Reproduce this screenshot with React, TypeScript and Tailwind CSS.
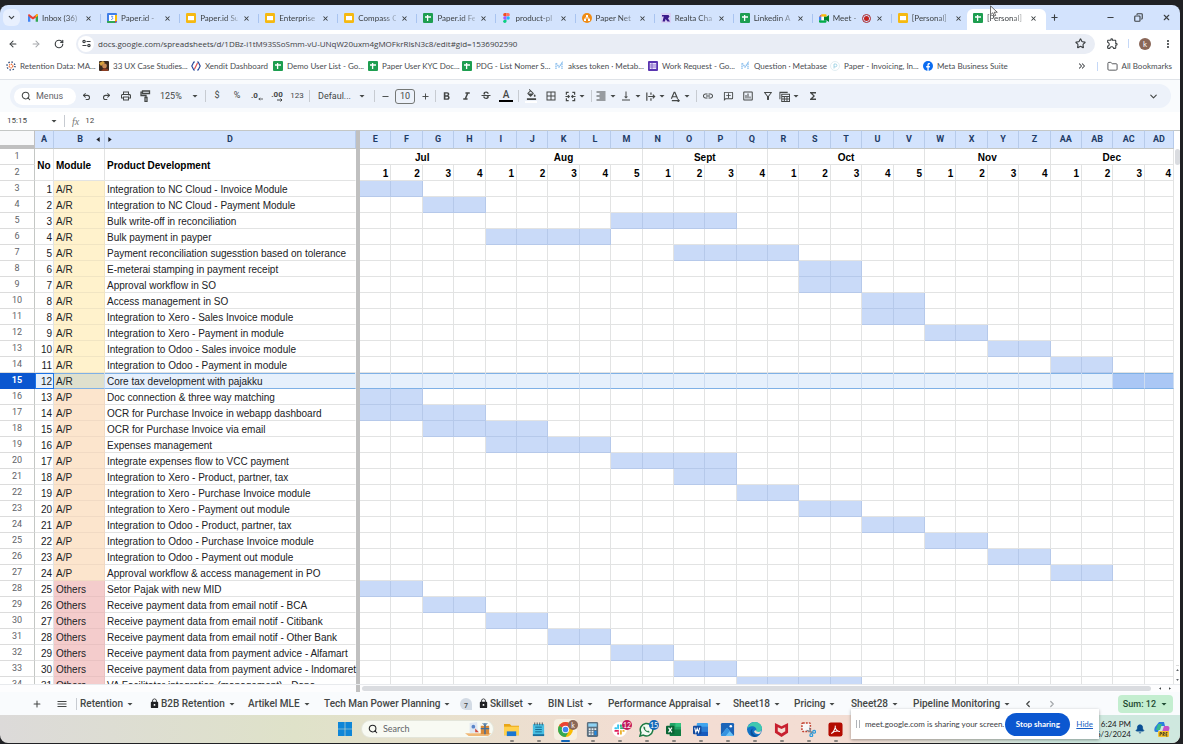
import type { ReactNode } from "react";
import {
  ArrowLeft, ArrowRight, Bell, ChevronDown, ChevronLeft, ChevronRight, ChevronsRight, Copy, Folder,
  Minus, Plus, Redo2, RotateCw, Search, Star, Undo2, X,
} from "lucide-react";
import {
  MdArrowDropDown, MdBorderAll, MdFormatAlignRight, MdFormatBold, MdFormatColorFill, MdFormatItalic,
  MdFunctions, MdInsertChartOutlined, MdLink, MdLock, MdMenu, MdMoreVert, MdOutlineAddComment,
  MdOutlineExtension, MdOutlineFilterAlt, MdOutlinePrint, MdStrikethroughS, MdVerticalAlignBottom,
} from "react-icons/md";

/* ---------- Small logos ---------- */

const SheetsLogo = () => (
  <svg viewBox="0 0 10 10" className="size-[10px] shrink-0">
    <rect width="10" height="10" rx="1" fill="#1e9e50" />
    <path d="M2 4h6M4.6 2v6" stroke="#fff" strokeWidth="1.3" />
  </svg>
);
const SlidesLogo = () => (
  <svg viewBox="0 0 10 10" className="size-[10px] shrink-0">
    <rect width="10" height="10" rx="1.2" fill="#f5b912" />
    <rect x="2" y="3" width="6" height="4.2" fill="#fff" />
  </svg>
);
const GmailLogo = () => (
  <svg viewBox="0 0 12 9" className="w-[10px] h-2 shrink-0">
    <path d="M0 9V1.5L2.8 3.6V9z" fill="#4285f4" />
    <path d="M12 9V1.5L9.2 3.6V9z" fill="#34a853" />
    <path d="M0 1.400C0 0 1.400-.3 2.400.5L6 3.200 9.600.5C10.600-.3 12 0 12 1.400L9.200 4.200 6 6.300 2.800 4.200z" fill="#ea4335" />
    <path d="M12 1.400C12 .2 10.600-.3 9.600.5l-.4.4v3.300z" fill="#fbbc04" />
  </svg>
);
const CalendarLogo = () => (
  <svg viewBox="0 0 10 10" className="size-[10px] shrink-0">
    <rect width="10" height="10" rx="1" fill="#3f7ee8" />
    <path d="M8 2h2v6H8z" fill="#fbbc04" />
    <path d="M0 8h8v2H1a1 1 0 0 1-1-1z" fill="#34a853" />
    <path d="M8 8h2l-2 2z" fill="#ea4335" />
    <rect x="2" y="2" width="6" height="6" fill="#fff" />
    <path d="M4 3.300h1.800L5 4.700c1 0 1.200 1.900-.9 1.900" fill="none" stroke="#3f7ee8" strokeWidth=".8" />
  </svg>
);
const FigmaLogo = () => (
  <svg viewBox="0 0 8 12" className="h-[10px] w-[7px] mx-px shrink-0">
    <path d="M4 0H2a2 2 0 0 0 0 4h2z" fill="#f24e1e" />
    <path d="M4 0h2a2 2 0 0 1 0 4H4z" fill="#ff7262" />
    <path d="M4 4H2a2 2 0 0 0 0 4h2z" fill="#a259ff" />
    <circle cx="6" cy="6" r="2" fill="#1abcfe" />
    <path d="M4 8H2a2 2 0 1 0 2 2z" fill="#0acf83" />
  </svg>
);
const NetworkLogo = () => (
  <svg viewBox="0 0 10 10" className="size-[10px] shrink-0">
    <circle cx="5" cy="5" r="5" fill="#f08c14" />
    <path d="M5 3v2M3 7V5h4v2" fill="none" stroke="#fff" strokeWidth=".8" />
    <rect x="4" y="2" width="2" height="2" fill="#fff" />
    <rect x="2" y="6" width="2" height="2" fill="#fff" />
    <rect x="6" y="6" width="2" height="2" fill="#fff" />
  </svg>
);
const RealtaLogo = () => (
  <svg viewBox="0 0 10 10" className="size-[10px] shrink-0">
    <rect width="10" height="10" fill="#d9d0f5" />
    <path d="M1 2h6.500l1 1.500-1.500 2L9 8.500H6.500L4.500 6 4 8.500H1.500L2.800 3.500H1z" fill="#3b1a8c" />
  </svg>
);
const MeetLogo = () => (
  <svg viewBox="0 0 12 10" className="h-[9px] w-[10px] shrink-0">
    <path d="M0 3l3-3v3z" fill="#ea4335" />
    <path d="M0 3h3v4H0z" fill="#4285f4" />
    <path d="M3 0h5a1 1 0 0 1 1 1v2H3z" fill="#fbbc04" />
    <path d="M0 7h9v2a1 1 0 0 1-1 1H1a1 1 0 0 1-1-1z" fill="#00ac47" />
    <path d="M3 3h3v4H3z" fill="#fff" />
    <path d="M6 3h3l3-2.300v8.600L9 7H6z" fill="#00832d" />
  </svg>
);
const RetentionLogo = () => (
  <svg viewBox="0 0 10 10" className="size-[10px] shrink-0">
    <circle cx="5" cy="5" r="4" fill="none" stroke="#2f4a78" strokeWidth="1.400" strokeDasharray="1.400 1.740" />
    <circle cx="5" cy="5" r="1.800" fill="none" stroke="#f0723a" strokeWidth="1.300" strokeDasharray="1.200 .7" />
  </svg>
);
const PhotoLogo = () => (
  <svg viewBox="0 0 10 10" className="size-[10px] shrink-0">
    <rect width="10" height="10" rx="1" fill="#3a2a20" />
    <path d="M0 2l4-2 2 2-4 3z" fill="#d8a23c" />
    <circle cx="5.500" cy="5" r="2.400" fill="#c98a55" />
    <path d="M2 10l3-3 4 1v2z" fill="#8c3d22" />
  </svg>
);
const XenditLogo = () => (
  <svg viewBox="0 0 10 10" className="size-[10px] shrink-0" fill="none" strokeWidth="1.200">
    <path d="M4 1H2.800L.8 5l2 4H4" stroke="#2b4a9c" />
    <path d="M6 1h1.200l2 4-2 4H6" stroke="#2b4a9c" />
    <path d="M6.500 2L3.500 8" stroke="#e25252" />
  </svg>
);
const MetabaseLogo = () => (
  <svg viewBox="0 0 10 10" className="size-[10px] shrink-0">
    <path d="M2 8V2l3 4 3-4v6" fill="none" stroke="#8fc1ee" strokeWidth="1.400" strokeDasharray="1.500 .6" />
  </svg>
);
const FormsLogo = () => (
  <svg viewBox="0 0 10 10" className="size-[10px] shrink-0">
    <rect width="10" height="10" rx="1" fill="#5a35b0" />
    <rect x="1.800" y="2" width="6.400" height="6" fill="#e9e0fb" />
    <path d="M2 4h6M2 6h6M4 2v6" stroke="#5a35b0" strokeWidth=".6" />
  </svg>
);
const PaperLogo = () => (
  <svg viewBox="0 0 10 10" className="size-[10px] shrink-0" fill="none">
    <circle cx="5" cy="5" r="4.500" stroke="#d5e6ec" strokeWidth=".7" />
    <path d="M4 7.500V3h1.500a1.300 1.300 0 0 1 0 2.800H4" stroke="#8fcbe0" strokeWidth=".8" />
  </svg>
);
const FacebookLogo = () => (
  <svg viewBox="0 0 10 10" className="size-[10px] shrink-0">
    <circle cx="5" cy="5" r="5" fill="#0a6cf1" />
    <path d="M4.400 10V6.400H3.200V5h1.200V4c0-1.300.7-1.900 1.800-1.900l.8.100v1.100h-.6c-.5 0-.7.3-.7.8V5h1.300l-.2 1.400H5.700V10z" fill="#fff" />
  </svg>
);

/* ---------- Browser chrome ---------- */

const tabs: { title: string; icon: ReactNode; recording?: boolean; active?: boolean }[] = [
  { title: "Inbox (36)", icon: <GmailLogo /> },
  { title: "Paper.id - ", icon: <CalendarLogo /> },
  { title: "Paper.id Su", icon: <SlidesLogo /> },
  { title: "Enterprise", icon: <SlidesLogo /> },
  { title: "Compass C", icon: <SlidesLogo /> },
  { title: "Paper.id Fe", icon: <SheetsLogo /> },
  { title: "product-pl", icon: <FigmaLogo /> },
  { title: "Paper Net", icon: <NetworkLogo /> },
  { title: "Realta Cha", icon: <RealtaLogo /> },
  { title: "Linkedin A", icon: <SheetsLogo /> },
  { title: "Meet -", icon: <MeetLogo />, recording: true },
  { title: "[Personal]", icon: <SlidesLogo /> },
  { title: "[Personal]", icon: <SheetsLogo />, active: true },
];

function TabStrip() {
  return (
    <div className="flex h-[25px] shrink-0 items-end bg-[#d3e3fd] text-[#3c4043]">
      <button aria-label="Search tabs" className="mb-1 ml-[3px] mr-[2px] grid size-[17px] place-items-center rounded-md bg-[#e8f0fe]">
        <ChevronDown className="size-[9px]" strokeWidth={3} />
      </button>
      <div role="tablist" className="flex min-w-0 max-w-[1024px] flex-1">
        {tabs.map((t, i) => (
          <div
            key={i}
            role="tab"
            aria-selected={!!t.active}
            className={`flex h-[21px] min-w-0 flex-1 items-center pl-[6px] pb-[3px] ${t.active ? "-ml-1 rounded-t-md bg-white" : ""}`}
          >
            {t.icon}
            <span className="ml-1 min-w-0 flex-1 overflow-hidden whitespace-nowrap text-[8px] leading-3 [mask-image:linear-gradient(to_right,black_65%,rgb(0_0_0/0.25))]">
              {t.title}
            </span>
            {t.recording && (
              <span className="grid size-[9px] shrink-0 place-items-center rounded-full border border-[#a8272b]">
                <span className="size-[5px] rounded-full bg-[#c5221f]" />
              </span>
            )}
            <button aria-label={`Close ${t.title}`} className="ml-[5px] mr-2 shrink-0">
              <X className="size-[7px]" strokeWidth={3.500} />
            </button>
            <span className={`h-[9px] w-px ${t.active || i === 11 ? "bg-transparent" : "bg-[#a9c4f0]"}`} />
          </div>
        ))}
      </div>
      <button aria-label="New tab" className="mb-2 ml-1"><Plus className="size-[9px]" strokeWidth={3} /></button>
      <div className="mb-2 ml-auto mr-[9px] flex items-center gap-[19px]">
        <button aria-label="Minimize"><Minus className="size-[9px]" strokeWidth={3} /></button>
        <button aria-label="Restore"><Copy className="size-[9px] -scale-x-100" strokeWidth={3} /></button>
        <button aria-label="Close window"><X className="size-[9px]" strokeWidth={3} /></button>
      </div>
    </div>
  );
}

function AddressBar() {
  return (
    <div className="flex h-[27px] shrink-0 items-center bg-white text-[#3c4043]">
      <button aria-label="Back" className="ml-2"><ArrowLeft className="size-[10px]" strokeWidth={2.500} /></button>
      <button aria-label="Forward" className="ml-[13px] text-[#a5a8ac]"><ArrowRight className="size-[10px]" strokeWidth={2.500} /></button>
      <button aria-label="Reload" className="ml-[13px]"><RotateCw className="size-[10px]" strokeWidth={2.800} /></button>
      <div className="ml-3 flex h-5 min-w-0 flex-1 items-center rounded-full bg-[#e9edf5] pl-[2px] pr-[9px]">
        <button aria-label="Site information" className="grid size-4 shrink-0 place-items-center rounded-full bg-white">
          <svg viewBox="0 0 10 10" className="size-[9px]" fill="none" stroke="currentColor" strokeWidth="1.300">
            <circle cx="2.300" cy="2.800" r="1.300" /><path d="M5 2.800h4.500" />
            <circle cx="7.700" cy="7.200" r="1.300" /><path d="M.5 7.200H5" />
          </svg>
        </button>
        <input
          aria-label="Address"
          className="ml-1 min-w-0 flex-1 bg-transparent font-['Open_Sans',sans-serif] text-[8px] leading-4 outline-none"
          defaultValue="docs.google.com/spreadsheets/d/1DBz-i1tM93SSoSmm-vU-UNqW20uxm4gMOFkrRIsN3c8/edit#gid=1536902590"
        />
        <button aria-label="Bookmark this page"><Star className="size-[11px]" strokeWidth={2.500} /></button>
      </div>
      <button aria-label="Extensions" className="ml-[11px]"><MdOutlineExtension className="size-[13px]" /></button>
      <span className="ml-[9px] h-[9px] w-px bg-[#c5d8f7]" />
      <button aria-label="Profile" className="ml-[10px] grid size-3 place-items-center rounded-full bg-[#8a6758] text-[8px] leading-none text-white">k</button>
      <button aria-label="Browser menu" className="ml-[11px] mr-[6px]"><MdMoreVert className="size-3" /></button>
    </div>
  );
}

const bookmarks: { label: string; icon: ReactNode; width: string }[] = [
  { label: "Retention Data: MA...", icon: <RetentionLogo />, width: "w-[93px]" },
  { label: "33 UX Case Studies...", icon: <PhotoLogo />, width: "w-[92px]" },
  { label: "Xendit Dashboard", icon: <XenditLogo />, width: "w-[82px]" },
  { label: "Demo User List - Go...", icon: <SheetsLogo />, width: "w-[95px]" },
  { label: "Paper User KYC Doc...", icon: <SheetsLogo />, width: "w-[94px]" },
  { label: "PDG - List Nomer S...", icon: <SheetsLogo />, width: "w-[92px]" },
  { label: "akses token · Metab...", icon: <MetabaseLogo />, width: "w-[94px]" },
  { label: "Work Request - Go...", icon: <FormsLogo />, width: "w-[92px]" },
  { label: "Question · Metabase", icon: <MetabaseLogo />, width: "w-[90px]" },
  { label: "Paper - Invoicing, In...", icon: <PaperLogo />, width: "w-[93px]" },
  { label: "Meta Business Suite", icon: <FacebookLogo />, width: "w-[93px]" },
];

function BookmarksBar() {
  return (
    <nav aria-label="Bookmarks" className="flex h-[23px] shrink-0 items-center overflow-hidden border-b border-[#dfe3e8] bg-white pb-1 pl-[6px] text-[8px] leading-3 text-[#4a4d51]">
      {bookmarks.map((b) => (
        <a key={b.label} href="#" className={`flex shrink-0 items-center gap-1 whitespace-nowrap ${b.width}`}>
          {b.icon}
          {b.label}
        </a>
      ))}
      <button aria-label="More bookmarks" className="ml-auto"><ChevronsRight className="size-[10px]" strokeWidth={2.500} /></button>
      <span className="ml-[10px] h-[9px] w-px bg-[#c5d8f7]" />
      <a href="#" className="ml-[9px] mr-2 flex items-center gap-1 whitespace-nowrap">
        <Folder className="size-[11px]" strokeWidth={2} />
        All Bookmarks
      </a>
    </nav>
  );
}

/* ---------- Sheets toolbar ---------- */

const Tool = ({ label, children }: { label: string; children: ReactNode }) => (
  <button aria-label={label} className="grid h-5 w-5 shrink-0 place-items-center text-[9px]">{children}</button>
);
const MenuTool = ({ label, children }: { label: string; children: ReactNode }) => (
  <button aria-label={label} className="flex h-5 w-[25px] shrink-0 items-center justify-center">
    {children}
    <MdArrowDropDown className="size-3 shrink-0" />
  </button>
);
const Divider = () => <span className="h-3 w-px shrink-0 bg-[#c7cbd1]" />;

function Toolbar() {
  return (
    <div className="flex h-8 shrink-0 items-center bg-[#f9fbfd] pb-1 pl-[10px] pr-[9px] pt-1 font-[Roboto,sans-serif] text-[#444746]">
      <div role="toolbar" aria-label="Main" className="flex h-6 min-w-0 flex-1 items-center rounded-full bg-[#edf2fa] pl-1">
        <label className="flex h-[17px] w-[62px] shrink-0 items-center rounded-full bg-white pl-[7px]">
          <Search className="size-[10px] shrink-0" strokeWidth={2.500} />
          <input aria-label="Search the menus" placeholder="Menus" className="ml-[5px] w-9 bg-transparent text-[9px] leading-3 outline-none placeholder:text-[#5f6368]" />
        </label>
        <Tool label="Undo"><Undo2 className="size-[9px]" strokeWidth={2.800} /></Tool>
        <Tool label="Redo"><Redo2 className="size-[9px]" strokeWidth={2.800} /></Tool>
        <Tool label="Print"><MdOutlinePrint className="size-3" /></Tool>
        <Tool label="Paint format">
          <svg viewBox="0 0 12 12" className="size-3" fill="none" stroke="currentColor" strokeWidth="1.300">
            <path d="M2.500 1h7v2.500h-7zM2.500 2.200H1V5.500h5V7.500M5 7.500h2v4H5z" />
          </svg>
        </Tool>
        <label className="relative flex w-[49px] shrink-0 items-center">
          <select aria-label="Zoom" className="w-full appearance-none bg-transparent pl-1 text-[9px] leading-3 outline-none">
            <option>125%</option>
          </select>
          <MdArrowDropDown className="pointer-events-none absolute right-1 size-3" />
        </label>
        <Divider />
        <span className="w-px" />
        <Tool label="Format as currency">$</Tool>
        <Tool label="Format as percent">%</Tool>
        <Tool label="Decrease decimal places">
          <span className="flex items-end text-[8px] font-bold leading-[10px]">
            .0
            <svg viewBox="0 0 6 4" className="h-1 w-[5px]" fill="none" stroke="currentColor"><path d="M6 2H1M2.500.5L1 2l1.500 1.500" /></svg>
          </span>
        </Tool>
        <Tool label="Increase decimal places">
          <span className="flex flex-col items-end text-[8px] font-bold leading-[7px]">
            .00
            <svg viewBox="0 0 6 4" className="h-1 w-[6px]" fill="none" stroke="currentColor"><path d="M0 2h5M3.500.5L5 2 3.500 3.500" /></svg>
          </span>
        </Tool>
        <Tool label="More formats"><span className="text-[8px]">123</span></Tool>
        <span className="w-[2px]" />
        <Divider />
        <label className="relative flex w-16 shrink-0 items-center">
          <select aria-label="Font" className="w-full appearance-none bg-transparent pl-2 text-[9px] leading-3 outline-none">
            <option>Defaul...</option>
          </select>
          <MdArrowDropDown className="pointer-events-none absolute right-[6px] size-3" />
        </label>
        <Divider />
        <Tool label="Decrease font size"><Minus className="size-[9px]" strokeWidth={2.500} /></Tool>
        <input aria-label="Font size" defaultValue="10" className="h-[15px] w-5 shrink-0 rounded-[3px] border border-[#747775] bg-transparent text-center text-[9px] outline-none" />
        <Tool label="Increase font size"><Plus className="size-[9px]" strokeWidth={2.500} /></Tool>
        <Divider />
        <Tool label="Bold"><MdFormatBold className="size-[13px]" /></Tool>
        <Tool label="Italic"><MdFormatItalic className="size-[13px]" /></Tool>
        <Tool label="Strikethrough"><MdStrikethroughS className="size-3" /></Tool>
        <Tool label="Text color">
          <span className="w-[14px] border-b-2 border-black text-center text-[10px] font-medium leading-[10px]">A</span>
        </Tool>
        <span className="w-[2px]" />
        <Divider />
        <span className="w-[2px]" />
        <Tool label="Fill color">
          <span className="grid w-3 place-items-center border-b-2 border-white pb-px"><MdFormatColorFill className="size-[11px]" /></span>
        </Tool>
        <Tool label="Borders"><MdBorderAll className="size-3" /></Tool>
        <span className="w-[3px]" />
        <MenuTool label="Merge cells">
          <svg viewBox="0 0 12 12" className="size-[11px] shrink-0" fill="none" stroke="currentColor" strokeWidth="1.300">
            <path d="M4 1.500H1.500V4M8 1.500h2.500V4M4 10.500H1.500V8M8 10.500h2.500V8M.5 6h4M7.500 6h4M3.200 4.500L4.700 6 3.200 7.500M8.800 4.500L7.300 6l1.500 1.500" />
          </svg>
        </MenuTool>
        <span className="w-[2px]" />
        <Divider />
        <span className="w-[2px]" />
        <MenuTool label="Horizontal align"><MdFormatAlignRight className="size-3" /></MenuTool>
        <MenuTool label="Vertical align"><MdVerticalAlignBottom className="size-3" /></MenuTool>
        <MenuTool label="Text wrapping">
          <svg viewBox="0 0 12 12" className="size-[11px] shrink-0" fill="none" stroke="currentColor" strokeWidth="1.300">
            <path d="M2 1.500v9M6.500 1.500v2.500M6.500 8v2.500M3.500 6h7M8.500 4l2 2-2 2" />
          </svg>
        </MenuTool>
        <MenuTool label="Text rotation">
          <svg viewBox="0 0 12 12" className="size-[11px] shrink-0" fill="none" stroke="currentColor" strokeWidth="1.300">
            <path d="M1.500 8.500l3-7h.8l3 7M2.500 6.300h4.800M2 10.500h8M8.500 9l1.500 1.500L8.500 12" />
          </svg>
        </MenuTool>
        <span className="w-[2px]" />
        <Divider />
        <span className="w-px" />
        <Tool label="Insert link"><MdLink className="size-3" /></Tool>
        <Tool label="Insert comment"><MdOutlineAddComment className="size-[11px] -scale-x-100" /></Tool>
        <Tool label="Insert chart"><MdInsertChartOutlined className="size-3" /></Tool>
        <Tool label="Create a filter"><MdOutlineFilterAlt className="size-3" /></Tool>
        <MenuTool label="Filter views">
          <svg viewBox="0 0 12 12" className="size-[11px] shrink-0" fill="none" stroke="currentColor" strokeWidth="1.100">
            <path d="M1 9V1.500h8.500M3 3.500h8.500V11.500H3zM3 6h8.500M3 8.700h8.500M5.800 6v5.500M8.700 6v5.500" />
          </svg>
        </MenuTool>
        <Tool label="Functions"><MdFunctions className="size-3" /></Tool>
        <button aria-label="Hide the menus" className="ml-auto mr-3"><ChevronDown className="size-[11px]" strokeWidth={2.500} /></button>
      </div>
    </div>
  );
}

function FormulaBar() {
  return (
    <div className="flex h-[18px] shrink-0 items-center bg-white font-[Roboto,sans-serif] text-[8px] text-[#444746]">
      <input aria-label="Name box" defaultValue="15:15" className="w-10 bg-transparent pl-[7px] outline-none" />
      <button aria-label="Named ranges" className="ml-2"><MdArrowDropDown className="size-3" /></button>
      <span className="ml-1 h-3 w-px bg-[#c7cbd1]" />
      <span className="ml-[7px] font-['Liberation_Serif',serif] text-[10px] italic text-[#747775]">fx</span>
      <input aria-label="Formula" defaultValue="12" className="ml-[6px] flex-1 bg-transparent outline-none" />
    </div>
  );
}

/* ---------- Spreadsheet grid ---------- */

const weekColumns = [
  "E", "F", "G", "H", "I", "J", "K", "L", "M", "N", "O", "P", "Q",
  "R", "S", "T", "U", "V", "W", "X", "Y", "Z", "AA", "AB", "AC", "AD",
];
const months = [
  { name: "Jul", weeks: 4 }, { name: "Aug", weeks: 5 }, { name: "Sept", weeks: 4 },
  { name: "Oct", weeks: 5 }, { name: "Nov", weeks: 4 }, { name: "Dec", weeks: 4 },
];
const weekNumbers = months.flatMap((m) => Array.from({ length: m.weeks }, (_, i) => i + 1));

/* [No, Module, Product development, first week column, last week column] */
const items: [number, string, string, number, number][] = [
  [1, "A/R", "Integration to NC Cloud - Invoice Module", 0, 1],
  [2, "A/R", "Integration to NC Cloud - Payment Module", 2, 3],
  [3, "A/R", "Bulk write-off in reconciliation", 8, 11],
  [4, "A/R", "Bulk payment in payper", 4, 7],
  [5, "A/R", "Payment reconciliation sugesstion based on tolerance", 10, 13],
  [6, "A/R", "E-meterai stamping in payment receipt", 14, 15],
  [7, "A/R", "Approval workflow in SO", 14, 15],
  [8, "A/R", "Access management in SO", 16, 17],
  [8, "A/R", "Integration to Xero - Sales Invoice module", 16, 17],
  [9, "A/R", "Integration to Xero - Payment in module", 18, 19],
  [10, "A/R", "Integration to Odoo - Sales invoice module", 20, 21],
  [11, "A/R", "Integration to Odoo - Payment in module", 22, 23],
  [12, "A/R", "Core tax development with pajakku", 24, 25],
  [13, "A/P", "Doc connection & three way matching", 0, 1],
  [14, "A/P", "OCR for Purchase Invoice in webapp dashboard", 0, 3],
  [15, "A/P", "OCR for Purchase Invoice via email", 2, 5],
  [16, "A/P", "Expenses management", 4, 7],
  [17, "A/P", "Integrate expenses flow to VCC payment", 8, 11],
  [18, "A/P", "Integration to Xero - Product, partner, tax", 10, 11],
  [19, "A/P", "Integration to Xero - Purchase Invoice module", 12, 13],
  [20, "A/P", "Integration to Xero - Payment out module", 14, 15],
  [21, "A/P", "Integration to Odoo - Product, partner, tax", 16, 17],
  [22, "A/P", "Integration to Odoo - Purchase Invoice module", 18, 19],
  [23, "A/P", "Integration to Odoo - Payment out module", 20, 21],
  [24, "A/P", "Approval workflow & access management in PO", 22, 23],
  [25, "Others", "Setor Pajak with new MID", 0, 1],
  [26, "Others", "Receive payment data from email notif - BCA", 2, 3],
  [27, "Others", "Receive payment data from email notif - Citibank", 4, 5],
  [28, "Others", "Receive payment data from email notif - Other Bank", 6, 7],
  [29, "Others", "Receive payment data from payment advice - Alfamart", 8, 9],
  [30, "Others", "Receive payment data from payment advice - Indomaret", 10, 11],
  [31, "Others", "VA Facilitator integration (management) - Dana", 12, 15],
];

const moduleFill: Record<string, string> = {
  "A/R": "bg-[#fff2cc] border-[#f1e5c3]",
  "A/P": "bg-[#fce5cd] border-[#f1dac4]",
  Others: "bg-[#f4cccc] border-[#e9c2c2]",
};

const columnHead = "h-[19px] border-b border-r border-t border-b-[#c4c7c5] border-r-[#b7cbea] border-t-[#c4c7c5] bg-[#d3e3fd] p-0 text-center text-[9px] font-bold leading-[17px] text-[#1f3c66]";
const rowHead = "h-4 border-b border-r border-b-[#dcdcdc] border-r-[#c4c7c5] bg-white p-0 text-center font-[Roboto,sans-serif] text-[9px] font-normal leading-[15px] text-[#5f6368]";
const cell = "h-4 border-b border-r p-0 pt-[2px] leading-[13px] whitespace-nowrap";
const freeze = "border-r-4 border-[#c0c0c0] bg-[#c0c0c0] p-0";

function Grid() {
  return (
    <table className="w-full table-fixed border-separate border-spacing-0 font-['Liberation_Sans',Arial,sans-serif] text-[10px] text-[#202124]">
      <colgroup>
        <col className="w-[35px]" />
        <col className="w-[19px]" />
        <col className="w-[51px]" />
        <col className="w-[251px]" />
        <col className="w-1" />
        {weekColumns.map((c) => <col key={c} className={c === "AD" ? "w-[29px]" : ""} />)}
      </colgroup>
      <thead className="font-[Roboto,sans-serif]">
        <tr>
          <td className="h-[19px] border-b-4 border-r border-t border-[#c0c0c0] border-t-[#c4c7c5] bg-[#f8f9fa] p-0" />
          <th scope="col" className={columnHead}>A</th>
          <th scope="col" className={columnHead}>
            <span className="flex items-center justify-end">
              B<button aria-label="Show hidden column C" className="ml-[9px] w-[12px]"><svg viewBox="0 0 4 6" className="mx-auto h-[5px] w-1"><path d="M4 0v6L0 3z" fill="#202124" /></svg></button>
            </span>
          </th>
          <th scope="col" className={columnHead}>
            <span className="flex items-center">
              <button aria-label="Expand hidden column C" className="w-[10px]"><svg viewBox="0 0 4 6" className="mx-auto h-[5px] w-1"><path d="M0 0v6l4-3z" fill="#202124" /></svg></button>
              <span className="flex-1 pr-[10px]">D</span>
            </span>
          </th>
          <td className={freeze} />
          {weekColumns.map((c) => <th key={c} scope="col" className={columnHead}>{c}</th>)}
        </tr>
      </thead>
      <tbody>
        <tr className="font-bold text-black">
          <th scope="row" className={rowHead}>1</th>
          <td rowSpan={2} className={`${cell} border-[#e2e3e3] text-center`}>No</td>
          <td rowSpan={2} className={`${cell} border-[#e2e3e3] pl-[2px]`}>Module</td>
          <td rowSpan={2} className={`${cell} border-[#e2e3e3] border-r-transparent pl-[2px]`}>Product Development</td>
          <td className={freeze} />
          {months.map((m) => (
            <td key={m.name} colSpan={m.weeks} className={`${cell} border-[#e2e3e3] text-center`}>{m.name}</td>
          ))}
        </tr>
        <tr className="font-bold text-black">
          <th scope="row" className={rowHead}>2</th>
          <td className={freeze} />
          {weekNumbers.map((n, i) => (
            <td key={i} className={`${cell} border-[#e2e3e3] pr-[2px] text-right`}>{n}</td>
          ))}
        </tr>
        {items.map(([no, module, name, from, to], r) => {
          const selected = no === 12;
          const line = selected ? "border-b-[#7fb1e6] border-r-[#cddcf0] shadow-[inset_0_1px_0_#7fb1e6]" : "border-[#e2e3e3]";
          return (
            <tr key={r} aria-selected={selected} className={selected ? "bg-[#e6f0fc]" : ""}>
              <th scope="row" className={selected ? "h-4 border-b border-r border-[#0b57d0] bg-[#0b57d0] p-0 text-center font-[Roboto,sans-serif] text-[9px] font-bold leading-[15px] text-white" : rowHead}>
                {r + 3}
              </th>
              <td className={selected ? `${cell} border-[#1a73e8] pr-px text-right shadow-[inset_1px_1px_0_#1a73e8]` : `${cell} border-[#e2e3e3] pr-px text-right`}>{no}</td>
              <td className={`${cell} pl-[2px] ${selected ? `bg-[#dfe0cd] ${line}` : moduleFill[module]}`}>{module}</td>
              <td className={`${cell} pl-[2px] ${line} border-r-transparent`}>{name}</td>
              <td className={freeze} />
              {weekColumns.map((c, i) => {
                const filled = i >= from && i <= to;
                const look = selected
                  ? `${line} ${filled ? "bg-[#aac7f5]" : ""}`
                  : filled ? "border-[#b6c9ea] bg-[#c9daf8]" : line;
                return <td key={c} className={`${cell} ${look}`} />;
              })}
            </tr>
          );
        })}
      </tbody>
    </table>
  );
}

function SheetArea() {
  return (
    <main className="flex min-h-0 flex-1 flex-col bg-white">
      <div className="flex min-h-0 flex-1">
        <div className="min-w-0 flex-1 overflow-hidden"><Grid /></div>
        <div className="flex w-[6px] shrink-0 flex-col items-center border-t border-[#c4c7c5] bg-white pt-[18px]">
          <div className="h-4 w-[5px] rounded-full bg-[#dadce0]" />
          <div className="mt-auto flex flex-col items-center gap-2 border-t border-[#dcdcdc] pb-[3px] pt-[3px]">
            <svg viewBox="0 0 4 3" className="h-[2px] w-[3px]"><path d="M0 3h4L2 0z" fill="#5f6368" /></svg>
            <svg viewBox="0 0 4 3" className="h-[2px] w-[3px]"><path d="M0 0h4L2 3z" fill="#5f6368" /></svg>
          </div>
        </div>
      </div>
      <div className="flex h-2 shrink-0 items-center border-t border-[#e8eaed] bg-[#fdfdfe]">
        <div className="h-full w-[356px] shrink-0" />
        <div className="h-full w-1 shrink-0 bg-[#c0c0c0]" />
        <div className="ml-[2px] h-[5px] flex-1 rounded-full bg-[#dadce0]" />
        <div className="flex w-[29px] shrink-0 items-center gap-2 pl-2">
          <svg viewBox="0 0 3 4" className="h-[3px] w-[2px]"><path d="M3 0v4L0 2z" fill="#3c4043" /></svg>
          <svg viewBox="0 0 3 4" className="h-[3px] w-[2px]"><path d="M0 0v4l3-2z" fill="#3c4043" /></svg>
        </div>
      </div>
    </main>
  );
}

const sheets: { name: string; width: string; locked?: boolean; count?: number }[] = [
  { name: "Retention", width: "w-[69px]" },
  { name: "B2B Retention", width: "w-[99px]", locked: true },
  { name: "Artikel MLE", width: "w-[76px]" },
  { name: "Tech Man Power Planning", width: "w-[136px]" },
  { name: "Skillset", width: "w-[88px]", count: 7, locked: true },
  { name: "BIN List", width: "w-[60px]" },
  { name: "Performance Appraisal", width: "w-[125px]" },
  { name: "Sheet18", width: "w-[61px]" },
  { name: "Pricing", width: "w-[57px]" },
  { name: "Sheet28", width: "w-[62px]" },
  { name: "Pipeline Monitoring", width: "w-[108px]" },
];

function SheetTabs() {
  return (
    <div className="flex h-[23px] shrink-0 items-center bg-[#f9fbfd] font-[Roboto,sans-serif] text-[10px] font-medium leading-4 text-[#444746]">
      <button aria-label="Add sheet" className="ml-8"><Plus className="size-[10px]" strokeWidth={2.500} /></button>
      <button aria-label="All sheets" className="ml-[14px]"><MdMenu className="size-3" /></button>
      <span className="ml-2 h-3 w-px bg-[#c7cbd1]" />
      <div className="ml-[3px] flex min-w-0 items-center overflow-hidden">
        {sheets.map((s) => (
          <button key={s.name} className={`flex shrink-0 items-center whitespace-nowrap ${s.width}`}>
            {s.count && <span className="mr-[6px] grid size-3 place-items-center rounded-full rounded-br-none bg-[#d3dbe5] text-[7px]">{s.count}</span>}
            {s.locked && <MdLock className="mr-px size-[11px] shrink-0 text-[#202124]" />}
            {s.name}
            <MdArrowDropDown className="ml-px size-3" />
          </button>
        ))}
      </div>
      <button aria-label="Scroll tabs left" className="ml-[2px]"><ChevronLeft className="size-[10px]" strokeWidth={3} /></button>
      <button aria-label="Scroll tabs right" className="ml-[14px] text-[#a5a8ac]"><ChevronRight className="size-[10px]" strokeWidth={3} /></button>
      <button className="ml-auto mr-[7px] flex h-[18px] items-center rounded bg-[#c4eed0] pl-[5px] pr-[3px] text-[9px] text-[#1f4a33]">
        Sum: 12<MdArrowDropDown className="ml-[2px] size-3" />
      </button>
    </div>
  );
}

/* ---------- Taskbar ---------- */

const Badge = ({ className, children }: { className: string; children: ReactNode }) => (
  <span className={`absolute -right-[5px] -top-[2px] grid h-[10px] min-w-[10px] place-items-center rounded-full text-[7px] leading-none text-white ${className}`}>{children}</span>
);

const apps: { name: string; active?: boolean; badge?: ReactNode; icon: ReactNode }[] = [
  { name: "File Explorer", icon: <><path d="M0 2h6l2 2h8v10H0z" fill="#e8a517" /><path d="M0 5h16v9H0z" fill="#ffd04d" /><path d="M3 10h10v5H3z" fill="#1976d2" /></> },
  { name: "Notepad", icon: <><rect x="2" y="2" width="12" height="13" rx="1" fill="#48bfe3" /><path d="M2 13h12v2H2z" fill="#1a6f9e" /><path d="M4.500 5.500h7M4.500 8h7M4.500 10.500h7" stroke="#14688f" /><path d="M4 .5v3M6.600.5v3M9.300.5v3M12 .5v3" stroke="#44515c" /></> },
  { name: "Chrome", active: true, badge: <Badge className="bg-[#8a6758]">k</Badge>, icon: <><circle cx="8" cy="8" r="8" fill="#fbbc04" /><path d="M8 8L1.100 4A8 8 0 0 1 14.900 4z" fill="#ea4335" /><path d="M8 8L1.100 4A8 8 0 0 0 8 16l3.500-6z" fill="#34a853" /><circle cx="8" cy="8" r="3.900" fill="#fff" /><circle cx="8" cy="8" r="3" fill="#4285f4" /></> },
  { name: "Calculator", icon: <><rect x="2" width="12" height="16" rx="1.500" fill="#5d6f7e" /><rect x="3.500" y="1.500" width="9" height="3.500" fill="#8fd3f4" /><path d="M4 7.500h2M7 7.500h2M10 7.500h2M4 10.300h2M7 10.300h2M4 13h2M7 13h2" stroke="#e5ecf1" strokeWidth="1.800" /><path d="M10 9.400h2.300V14H10z" fill="#1e88e5" /></> },
  { name: "Slack", badge: <Badge className="bg-[#c2185b]">12</Badge>, icon: <><circle cx="8" cy="8" r="8" fill="#fff" /><g strokeWidth="2" strokeLinecap="round"><path d="M6.500 3.500v3.200" stroke="#36c5f0" /><path d="M3.500 6.700h1" stroke="#36c5f0" /><path d="M9.400 6.500h3.200" stroke="#2eb67d" /><path d="M9.500 3.500v1" stroke="#2eb67d" /><path d="M9.500 9.500v3" stroke="#ecb22e" /><path d="M12.500 9.500h-.5" stroke="#ecb22e" /><path d="M3.500 9.500h3" stroke="#e01e5a" /><path d="M6.500 12.500V12" stroke="#e01e5a" /></g></> },
  { name: "WhatsApp", badge: <Badge className="bg-[#1467b8]">15</Badge>, icon: <><path d="M1 15l1.100-3.700A6.700 6.700 0 1 1 4.700 14z" fill="#f3faf3" stroke="#1c7a43" strokeWidth="1.600" /><path d="M5.200 4.500c-1 .9-.4 3 1.400 4.800s3.900 2.400 4.900 1.300l-1.800-1.500-1 .7L6.300 7.500l.6-1z" fill="#1c7a43" /></> },
  { name: "Excel", icon: <><rect x="4" y="1" width="12" height="14" rx="1" fill="#21a366" /><path d="M10 1h5a1 1 0 0 1 1 1v3h-6z" fill="#33c481" /><path d="M4 8h12v6a1 1 0 0 1-1 1H5a1 1 0 0 1-1-1z" fill="#107c41" /><rect y="4" width="9" height="9" rx="1" fill="#0b6535" /><path d="M2.700 6l3.600 5M6.300 6l-3.600 5" stroke="#fff" strokeWidth="1.300" /></> },
  { name: "Word", icon: <><rect x="4" y="1" width="12" height="14" rx="1" fill="#41a5ee" /><path d="M4 5h12v5H4z" fill="#2b7cd3" /><path d="M4 10h12v4a1 1 0 0 1-1 1H5a1 1 0 0 1-1-1z" fill="#185abd" /><rect y="4" width="9" height="9" rx="1" fill="#124a9e" /><path d="M1.800 6l1.200 5L4.500 7 6 11l1.200-5" fill="none" stroke="#fff" strokeWidth="1.100" /></> },
  { name: "Photos", icon: <><rect x="1" y="1" width="14" height="14" rx="1.500" fill="#1c64b8" /><path d="M1 14l6.500-8L15 15H2z" fill="#6cc3f5" /><path d="M7.500 6l3 3.600L6 15H2l-1-1z" fill="#3793e0" /><circle cx="11.500" cy="4.500" r="1.400" fill="#fff" /></> },
  { name: "Edge", icon: <><circle cx="8" cy="8" r="8" fill="#1273c6" /><path d="M.3 7C1.200 2.500 5 0 8.500 0 13 0 16 3.300 16 6.700c0 2.600-2 4-4.300 4-2 0-2.500-.8-2-1.500C11 6.500 8 4.400 5.200 4.500 3 4.600 1 5.700.3 7z" fill="#3fc8b0" /><path d="M5.500 9c0 3.600 3 6 7 5.500A8 8 0 0 1 8 16c-3-.8-4.700-3.600-4.300-6 .3-2 2-3.200 3.400-3.200C6 7.300 5.500 8 5.500 9z" fill="#0c4f9c" /><path d="M10 8.500c-.2.400-.8 1 .3 1.700 1.800 1 4.500.3 5.400-1.400-.4 1.800-1.400 3-2.500 3.700-3 .8-5.500-.8-5.600-3z" fill="#f3dcd2" /></> },
  { name: "McAfee", icon: <path d="M1 1l7 3.500L15 1v10.500L8 16l-7-4.500zm3 4.500v4.300l4 2.500 4-2.500V5.500L8 7.500z" fill="#c8202f" /> },
  { name: "Snipping Tool", icon: <><rect x="1" y="1" width="9" height="9" rx="1" fill="#f7f7f7" stroke="#c2402f" strokeWidth="1.600" strokeDasharray="2 1.200" /><path d="M6 9l8 2.500M9 6l2.500 8" stroke="#7b8894" strokeWidth="1.400" /><circle cx="14" cy="10.500" r="1.500" fill="#f3ddd3" stroke="#2c9adb" strokeWidth="1.300" /><circle cx="11" cy="14" r="1.500" fill="#f3ddd3" stroke="#2c9adb" strokeWidth="1.300" /></> },
  { name: "Acrobat", icon: <><rect x=".5" y=".5" width="15" height="15" rx="2.500" fill="#b30b00" /><path d="M3.500 12.300c2-1 4.700-5.300 4.300-8.300-.8 2.500 1.800 6.500 4.800 6.200-2.700-1-6.500 0-9.100 2.100z" fill="none" stroke="#fff" strokeWidth="1.100" /></> },
];

function Taskbar() {
  return (
    <footer className="flex h-7 shrink-0 items-center bg-linear-to-r from-[#dcdad9] from-0% via-[#dfe2c9] via-25% to-[#f3ddd3] to-55% pl-[338px]">
      <button aria-label="Start" className="shrink-0">
        <svg viewBox="0 0 14 14" className="size-[14px]" fill="#0f86d8"><path d="M0 0h6.700v6.700H0zM7.300 0H14v6.700H7.300zM0 7.300h6.700V14H0zM7.300 7.300H14V14H7.300z" /></svg>
      </button>
      <label className="ml-[9px] mr-1 flex h-[18px] w-[133px] shrink-0 items-center rounded-full border border-[#e3e5da] bg-[#f8faf3] pl-[6px] pr-[2px]">
        <Search className="size-[10px] shrink-0 text-[#202124]" strokeWidth={2.500} />
        <input aria-label="Search Windows" placeholder="Search" className="ml-[5px] min-w-0 flex-1 bg-transparent text-[9px] leading-3 outline-none placeholder:text-[#5f6368]" />
        <svg viewBox="0 0 28 16" className="h-[15px] w-[26px] shrink-0">
          <path d="M0 12h28l-3 3H4z" fill="#f0b978" />
          <path d="M5 1l8-1 1 11-9 1z" fill="#dfe7f2" /><circle cx="9" cy="5" r="2" fill="#5a84c8" /><path d="M11 7l4 4h-4z" fill="#d04b3e" />
          <rect x="17" y="4" width="9" height="9" fill="#d98a3a" /><path d="M17 7h9M21.500 1v12" stroke="#3f6f9e" strokeWidth="1.500" /><path d="M19 1l2.500 3L24 1" fill="none" stroke="#3f6f9e" />
        </svg>
      </label>
      <div className="flex h-full">
        {apps.map((a) => (
          <button key={a.name} aria-label={a.name} className="flex h-full w-[27px] shrink-0 flex-col items-center pt-1">
            <span className={`flex flex-col items-center rounded ${a.active ? "bg-[#f8f3e6]/80" : ""}`}>
              <span className="relative grid h-[21px] w-[23px] place-items-center">
                <span className="relative">
                  <svg viewBox="0 0 16 16" className="size-[15px]">{a.icon}</svg>
                  {a.badge}
                </span>
              </span>
            </span>
            <span className={`h-[2px] rounded-full ${a.active ? "w-[9px] bg-[#1467b8]" : "w-1 bg-[#8a8580]"}`} />
          </button>
        ))}
      </div>
      <div className="flex h-full min-w-0 flex-1 items-center justify-end bg-linear-to-r from-[#f3ddd3] to-[#cfe8df] to-60% pr-[10px]">
        <div className="text-right text-[8px] leading-[10px] text-[#202124]">
          <div>6:24 PM</div>
          <div>6/3/2024</div>
        </div>
        <button aria-label="Notifications" className="ml-1"><Bell className="size-[10px] fill-[#0b4f94] text-[#0b4f94]" /></button>
        <button aria-label="Copilot" className="ml-[9px]">
          <svg viewBox="0 0 16 16" className="size-4">
            <path d="M5 1h5l1 4H6l-2 6H2C0 11 0 8 1 6z" fill="#2b7de0" />
            <path d="M4 3L2 9h4l2-6z" fill="#35b98d" />
            <path d="M10 5h3c2.500 0 3 2 2 4l-2 5H7l3-9z" fill="#c653c8" />
            <rect x="4" y="10" width="11" height="6" rx="1" fill="#f7c32c" />
            <path d="M6 15v-3.500h1.500v1.500H6M9 15v-3.500h1.300V13H9.400l1 2M13.500 11.500H12V15h1.500M12 13.200h1.300" fill="none" stroke="#222" strokeWidth=".7" />
          </svg>
        </button>
      </div>
    </footer>
  );
}

export default function App() {
  return (
    <div className="relative h-screen bg-[#202124] pb-px pr-[3px] pt-[5px] font-[Lato,'Open_Sans',sans-serif]">
      <div className="flex h-full flex-col overflow-hidden rounded-lg">
        <TabStrip />
        <AddressBar />
        <BookmarksBar />
        <Toolbar />
        <FormulaBar />
        <SheetArea />
        <SheetTabs />
        <Taskbar />
      </div>
      <div role="status" className="absolute bottom-[5px] right-[84px] flex h-[30px] w-[248px] items-center bg-white pl-[5px] text-[8px] text-[#3c4043] shadow-[0_1px_3px_rgba(0,0,0,0.35)]">
        <span className="h-2 w-[4px] shrink-0 border-x border-[#b0b3b8]" />
        <span className="ml-[5px] flex-1 whitespace-nowrap">meet.google.com is sharing your screen.</span>
        <button className="h-[23px] w-[65px] shrink-0 whitespace-nowrap rounded-full bg-[#0b57d0] text-[8px] font-bold text-white">Stop sharing</button>
        <a href="#" className="mx-[6px] text-[#1a5fc4] underline">Hide</a>
      </div>
      <svg viewBox="0 0 9 13" className="absolute right-[185px] top-[5px] h-3 w-2">
        <path d="M.6.800v10l2.500-2.300 1.600 3.700 1.700-.7-1.600-3.600h3.400z" fill="#fff" stroke="#333" strokeWidth=".8" />
      </svg>
    </div>
  );
}
